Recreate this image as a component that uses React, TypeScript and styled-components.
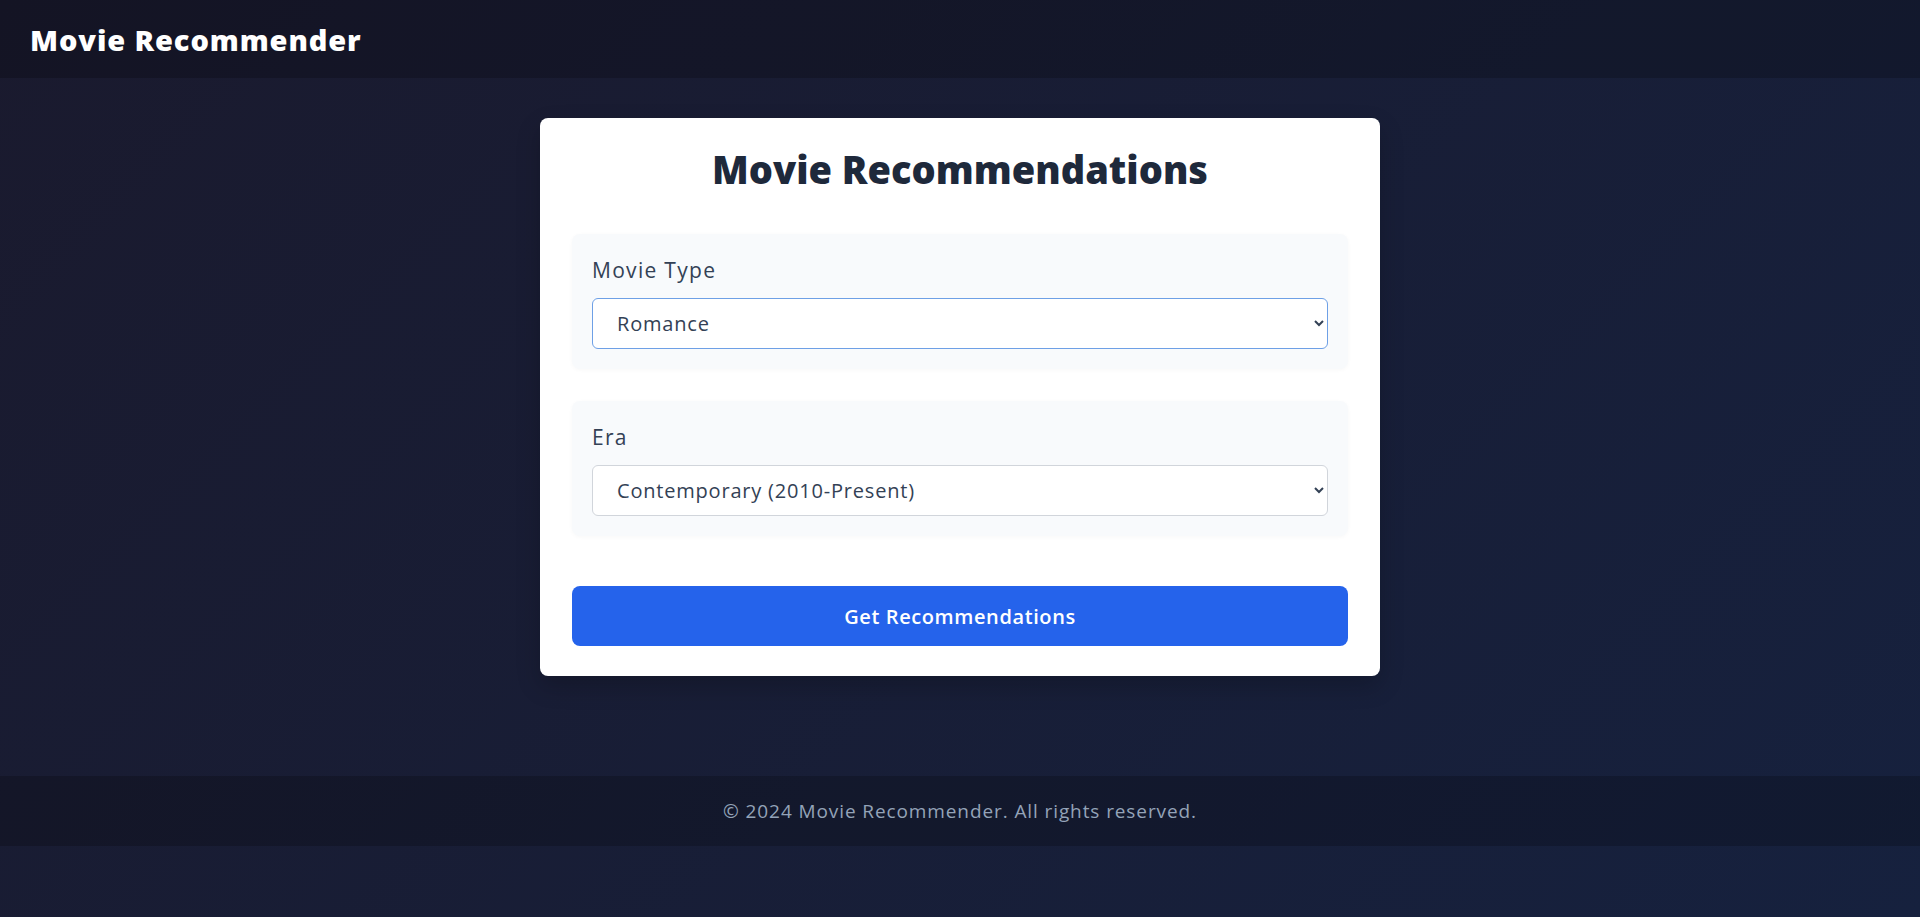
import * as React from 'react';
import styled, { createGlobalStyle } from 'styled-components';

const GlobalStyle = createGlobalStyle`
	* {
		box-sizing: border-box;
	}
	body {
		margin: 0;
		font-family: 'Open Sans', 'Liberation Sans', sans-serif;
		background: linear-gradient(135deg, #1a1a2e 0%, #16213e 100%);
		min-height: 100vh;
		color: #334155;
	}
`;

const Page = styled.div`
	min-height: 100vh;
	display: flex;
	flex-direction: column;
`;

const Header = styled.header`
	height: 78px;
	display: flex;
	align-items: center;
	padding: 0 30px;
	background-color: rgba(0, 0, 0, 0.2);
`;

const Brand = styled.h1`
	margin: 0;
	font-size: 29px;
	font-weight: 800;
	color: #ffffff;
	letter-spacing: 0.9px;
`;

const Main = styled.main`
	min-height: 698px;
	padding-top: 40px;
	display: flex;
	justify-content: center;
	align-items: flex-start;
`;

const Card = styled.section`
	width: 840px;
	background: #ffffff;
	border-radius: 8px;
	padding: 32px 32px 30px;
	box-shadow: 0 10px 25px rgba(0, 0, 0, 0.2);
	display: flex;
	flex-direction: column;
`;

const Title = styled.h2`
	margin: -6px 0 40px;
	text-align: center;
	font-size: 38px;
	line-height: 50px;
	font-weight: 800;
	color: #1e293b;
`;

const FieldGroup = styled.div`
	background: #f8fafc;
	border-radius: 8px;
	padding: 20px;
	margin-bottom: 32px;
	box-shadow: 0 1px 4px rgba(0, 0, 0, 0.03);
	display: flex;
	flex-direction: column;
	gap: 12px;
`;

const Label = styled.label`
	font-size: 21px;
	line-height: 32px;
	font-weight: 500;
	color: #334155;
	letter-spacing: 1.3px;
`;

const Select = styled.select<{ $active?: boolean }>`
	height: 51px;
	width: 100%;
	padding: 0 16px 0 20px;
	font-family: inherit;
	font-size: 20px;
	letter-spacing: 0.8px;
	color: #334155;
	background: #ffffff;
	border: 1px solid ${(p) => (p.$active ? '#6ea0e6' : '#d1d5db')};
	border-radius: 6px;
	outline: none;
`;

const Button = styled.button`
	margin-top: 18px;
	height: 60px;
	border: none;
	border-radius: 8px;
	background: #2563eb;
	color: #ffffff;
	font-family: inherit;
	font-size: 20px;
	letter-spacing: 0.6px;
	font-weight: 600;
	cursor: pointer;
`;

const Footer = styled.footer`
	height: 70px;
	display: flex;
	align-items: center;
	justify-content: center;
	background-color: rgba(0, 0, 0, 0.2);
	color: #94a3b8;
	font-size: 19px;
	letter-spacing: 0.9px;
`;

const genres = ['Action', 'Comedy', 'Drama', 'Horror', 'Romance', 'Sci-Fi', 'Thriller'];
const eras = [
	'Classic (Before 1970)',
	'Modern (1970-2009)',
	'Contemporary (2010-Present)',
];

const App = () => {
	const [genre, setGenre] = React.useState('Romance');
	const [era, setEra] = React.useState('Contemporary (2010-Present)');

	return (
		<Page>
			<GlobalStyle />
			<Header>
				<Brand>Movie Recommender</Brand>
			</Header>
			<Main>
				<Card>
					<Title>Movie Recommendations</Title>
					<FieldGroup>
						<Label htmlFor="type">Movie Type</Label>
						<Select id="type" $active value={genre} onChange={(e) => setGenre(e.target.value)}>
							{genres.map((g) => (
								<option key={g}>{g}</option>
							))}
						</Select>
					</FieldGroup>
					<FieldGroup>
						<Label htmlFor="era">Era</Label>
						<Select id="era" value={era} onChange={(e) => setEra(e.target.value)}>
							{eras.map((g) => (
								<option key={g}>{g}</option>
							))}
						</Select>
					</FieldGroup>
					<Button>Get Recommendations</Button>
				</Card>
			</Main>
			<Footer>© 2024 Movie Recommender. All rights reserved.</Footer>
		</Page>
	);
};

export default App;
